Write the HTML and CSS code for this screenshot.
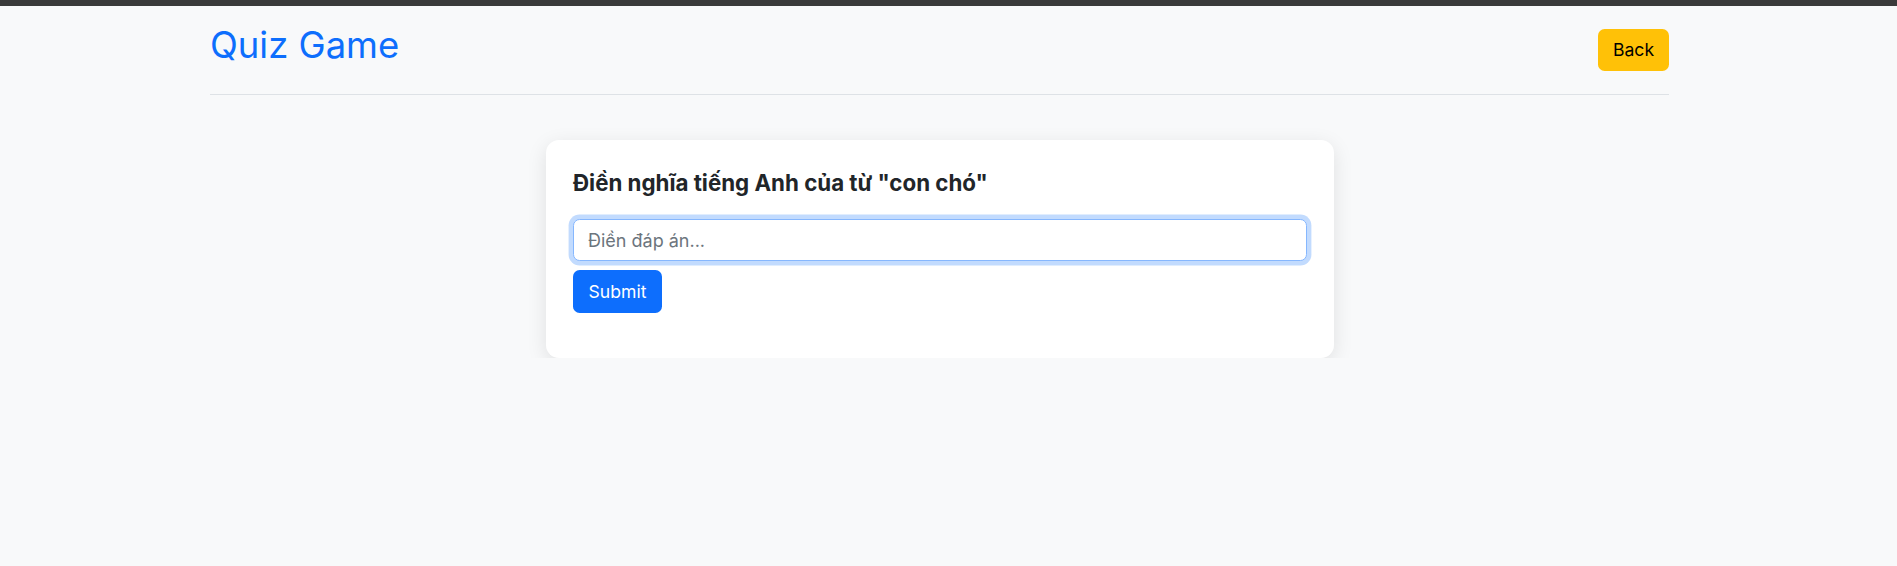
FILE: index.html
```html
<!DOCTYPE html>
<html lang="vi">
<head>
<meta charset="utf-8">
<title>Quiz Game</title>
<link rel="stylesheet" href="styles.css">
</head>
<body>
<div class="topbar"></div>
<div class="page">
  <header class="header">
    <h1 class="title">Quiz Game</h1>
    <button class="btn btn-back" type="button">Back</button>
  </header>
  <main class="main">
    <section class="card">
      <h2 class="question">Điền nghĩa tiếng Anh của từ "con chó"</h2>
      <input class="answer" type="text" placeholder="Điền đáp án...">
      <div class="actions">
        <button class="btn btn-submit" type="button">Submit</button>
      </div>
    </section>
  </main>
</div>
</body>
</html>
```
FILE: styles.css
```css
* { box-sizing: border-box; }
html, body {
  margin: 0;
  padding: 0;
  background: #f8f9fa;
  font-family: Inter, "Noto Sans", sans-serif;
  color: #212529;
}
.topbar {
  height: 6px;
  background: #3a3a3a;
}
.page {
  width: 1459px;
  margin-left: 210px;
}
.header {
  display: flex;
  justify-content: space-between;
  align-items: flex-start;
  height: 89px;
  border-bottom: 1px solid #dee2e6;
}
.title {
  margin: 18px 0 0 0;
  font-size: 36.4px;
  font-weight: 400;
  line-height: 1.2;
  color: #0d6efd;
}
.btn {
  font-family: Inter, "Noto Sans", sans-serif;
  font-size: 17.6px;
  line-height: 1.5;
  border: 1px solid transparent;
  border-radius: 6.6px;
  cursor: pointer;
}
.btn-back {
  margin-top: 23px;
  width: 71px;
  height: 42px;
  padding: 0 13px;
  background: #ffc107;
  color: #000;
}
.main {
  display: flex;
  padding-left: 336px;
  padding-top: 45px;
}
.card {
  width: 788px;
  height: 218px;
  background: #fff;
  border-radius: 13px;
  padding: 27px 27px 0 27px;
  box-shadow: 0 5px 20px rgba(0, 0, 0, 0.1);
}
.question {
  margin: 3px 0 22.5px 0;
  font-size: 22.3px;
  font-weight: 700;
  line-height: 1.2;
  color: #212529;
}
.answer {
  display: block;
  width: 734px;
  height: 42px;
  padding: 0 14px;
  font-family: Inter, "Noto Sans", sans-serif;
  font-size: 18px;
  color: #212529;
  background: #fff;
  border: 1px solid #86b7fe;
  border-radius: 6.6px;
  box-shadow: 0 0 0 4.4px rgba(13, 110, 253, 0.25);
  outline: none;
}
.answer::placeholder {
  color: #6c757d;
}
.actions {
  margin-top: 9px;
}
.btn-submit {
  width: 89px;
  height: 43px;
  padding: 0 14px;
  background: #0d6efd;
  color: #fff;
}
```
